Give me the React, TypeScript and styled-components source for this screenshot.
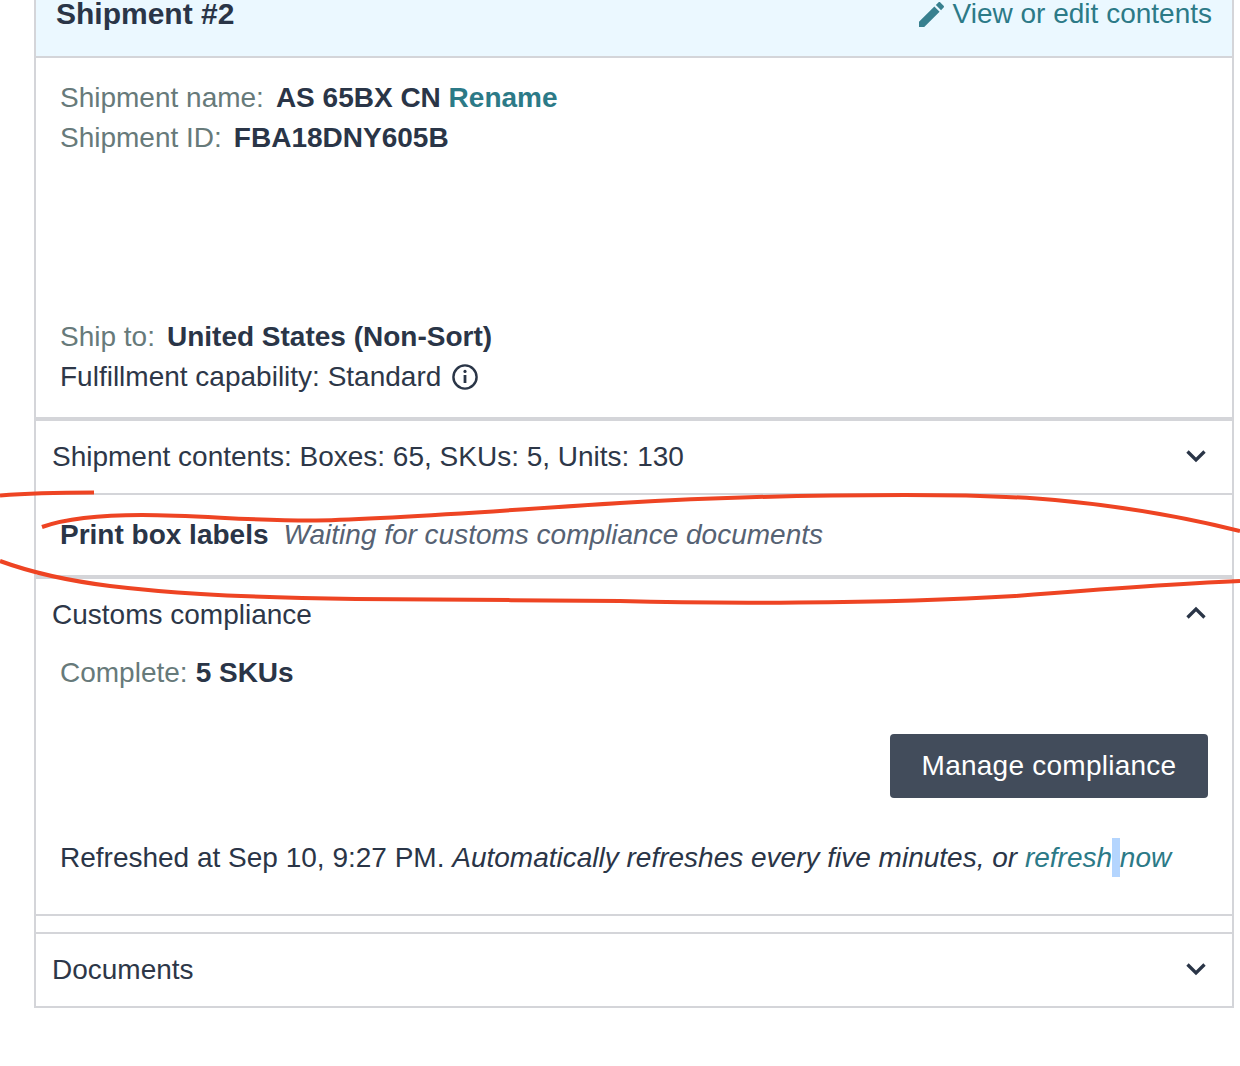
import React from "react";
import styled, { createGlobalStyle } from "styled-components";

const Global = createGlobalStyle`
  html, body { margin: 0; padding: 0; background: #fff; }
  body { font-family: "Liberation Sans", Arial, sans-serif; color: #2d3748; -webkit-font-smoothing: antialiased; }
`;

const Page = styled.div`
  position: relative;
  width: 1240px;
  height: 1066px;
  overflow: hidden;
`;

const Card = styled.div`
  box-sizing: border-box;
  width: 1200px;
  margin-left: 34px;
  border: 2px solid #d4d5d9;
  border-top: 0;
  font-size: 28px;
  line-height: 40px;
`;

const Header = styled.header`
  box-sizing: border-box;
  height: 58px;
  padding: 0 20px;
  display: flex;
  justify-content: space-between;
  background: #ebf8ff;
  border-bottom: 2px solid #d4d5d9;
`;

const Title = styled.h2`
  margin: 0;
  font-size: 30px;
  line-height: 28px;
  font-weight: 700;
  color: #2a3547;
`;

const EditLink = styled.a`
  display: flex;
  align-items: center;
  gap: 9px;
  color: #2c7a87;
  height: 28px;
  line-height: 28px;
`;

const PencilIcon = styled.svg`
  width: 25px;
  height: 25px;
  fill: #38808f;
`;

const Info = styled.section`
  padding: 20px 24px;
  border-bottom: 4px solid #d4d5d9;
`;

const Spacer = styled.div`
  height: 159px;
`;

const Line = styled.div<{ $gap?: number }>`
  display: flex;
  align-items: center;
  gap: ${(p) => p.$gap ?? 12}px;
  white-space: pre;
`;

const Label = styled.span`
  color: #677a7a;
`;

const Value = styled.strong`
  color: #2a3547;
`;

const TealBold = styled.a`
  font-weight: 700;
  color: #2c7a87;
`;

const RowPlain = styled.div<{ $thick?: boolean; $h: number }>`
  box-sizing: border-box;
  height: ${(p) => p.$h}px;
  padding: 0 24px 0 16px;
  display: flex;
  align-items: center;
  justify-content: space-between;
  border-bottom: ${(p) => (p.$thick ? 4 : 2)}px solid #d4d5d9;
`;

const PrintRow = styled.div`
  box-sizing: border-box;
  height: 84px;
  padding: 0 24px;
  display: flex;
  align-items: center;
  gap: 15px;
  border-bottom: 4px solid #d4d5d9;
`;

const Waiting = styled.em`
  color: #566273;
`;

const Customs = styled.section`
  box-sizing: border-box;
  height: 337px;
  border-bottom: 2px solid #d4d5d9;
`;

const CustomsHead = styled.div`
  height: 72px;
  padding: 0 24px 0 16px;
  display: flex;
  align-items: center;
  justify-content: space-between;
`;

const Complete = styled.div`
  padding: 0 24px;
  margin-top: 2px;
  display: flex;
  gap: 8px;
`;

const Actions = styled.div`
  margin-top: 41px;
  padding: 0 24px;
  display: flex;
  justify-content: flex-end;
`;

const Button = styled.button`
  width: 318px;
  height: 64px;
  border: 0;
  border-radius: 4px;
  background: #424c5b;
  color: #fff;
  font: inherit;
  letter-spacing: 0.25px;
`;

const Refreshed = styled.p`
  margin: 40px 0 0;
  padding: 0 24px;
  color: #2a3547;
`;

const TealLink = styled.a`
  color: #2c7a87;
`;

const Selected = styled.span`
  background: #b4d5fe;
  padding: 4px 0;
`;

const Gap = styled.div`
  height: 16px;
`;

const DocsRow = styled(RowPlain)`
  border-top: 2px solid #d4d5d9;
  border-bottom: 0;
`;

const Chevron = styled.svg`
  width: 24px;
  height: 24px;
  fill: none;
  stroke: #2a3547;
  stroke-width: 3.3;
`;

const InfoIcon = styled.svg`
  width: 28px;
  height: 28px;
  fill: none;
  stroke: #2a3547;
`;

const Scribble = styled.svg`
  position: absolute;
  inset: 0;
  width: 1240px;
  height: 1066px;
  fill: none;
  stroke: #ee4423;
  stroke-width: 4;
  pointer-events: none;
`;

const Down = () => (
  <Chevron viewBox="0 0 24 24"><path d="M3.5 6.5L12 15l8.5-8.5" /></Chevron>
);
const Up = () => (
  <Chevron viewBox="0 0 24 24"><path d="M3.5 14.5L12 6l8.5 8.5" /></Chevron>
);

export default function App() {
  return (
    <Page>
      <Global />
      <Card>
        <Header>
          <Title>Shipment #2</Title>
          <EditLink>
            <PencilIcon viewBox="3 3 18 18">
              <path d="M3 17.25V21h3.75L17.81 9.94l-3.75-3.75L3 17.25zM20.71 7.04c.39-.39.39-1.02 0-1.41l-2.34-2.34c-.39-.39-1.02-.39-1.41 0l-1.83 1.83 3.75 3.75 1.83-1.83z" />
            </PencilIcon>
            <span>View or edit contents</span>
          </EditLink>
        </Header>
        <Info>
          <Line>
            <Label>Shipment name:</Label>
            <span><Value>AS 65BX CN</Value> <TealBold>Rename</TealBold></span>
          </Line>
          <Line>
            <Label>Shipment ID:</Label>
            <Value>FBA18DNY605B</Value>
          </Line>
          <Spacer />
          <Line>
            <Label>Ship to:</Label>
            <Value>United States (Non-Sort)</Value>
          </Line>
          <Line $gap={10}>
            <span>Fulfillment capability: Standard</span>
            <InfoIcon viewBox="0 0 28 28">
              <circle cx="14" cy="14" r="11.6" strokeWidth="2.4" />
              <path d="M14 12v8" strokeWidth="2.8" />
              <circle cx="14" cy="8.4" r="1.6" fill="#2a3547" stroke="none" />
            </InfoIcon>
          </Line>
        </Info>
        <RowPlain $h={74}>
          <span>Shipment contents: Boxes: 65, SKUs: 5, Units: 130</span>
          <Down />
        </RowPlain>
        <PrintRow>
          <Value>Print box labels</Value>
          <Waiting>Waiting for customs compliance documents</Waiting>
        </PrintRow>
        <Customs>
          <CustomsHead>
            <span>Customs compliance</span>
            <Up />
          </CustomsHead>
          <Complete>
            <Label>Complete:</Label>
            <Value>5 SKUs</Value>
          </Complete>
          <Actions>
            <Button>Manage compliance</Button>
          </Actions>
          <Refreshed>
            Refreshed at Sep 10, 9:27 PM. <em>Automatically refreshes every five minutes, or <TealLink>refresh<Selected> </Selected>now</TealLink></em>
          </Refreshed>
        </Customs>
        <Gap />
        <DocsRow $h={74}>
          <span>Documents</span>
          <Down />
        </DocsRow>
      </Card>
      <Scribble viewBox="0 0 1240 1066">
        <path d="M0 495.5C30 493 60 492.5 94 492.5" />
        <path d="M42 527C70 517 105 515 142 515C200 515 250 521 316 520.5C400 519 520 509 620 503C720 497 820 495 905 495C960 495 1010 496 1055 500C1120 506 1180 516 1240 531" />
        <path d="M0 561C30 572 70 581 110 586C160 592 220 597 356 599C450 600 530 600 620 601C690 603 740 603 798 602.5C880 602 950 600 1015 596C1090 590 1170 584 1240 581" />
      </Scribble>
    </Page>
  );
}
